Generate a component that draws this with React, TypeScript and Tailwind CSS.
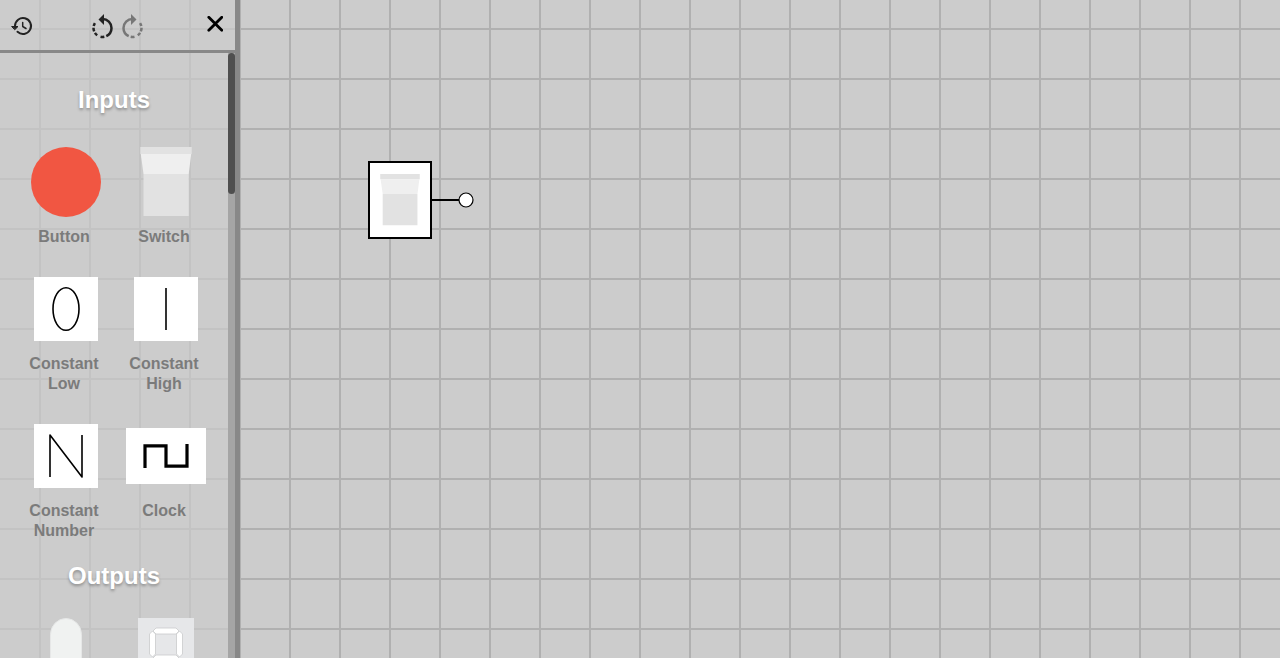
import type { ReactNode } from "react";

type Part = { name: string; icon: ReactNode; unlabelled?: boolean };

function HistoryIcon() {
  return (
    <svg width="24" height="24" viewBox="0 0 24 24" fill="none" stroke="currentColor" strokeLinecap="round" strokeLinejoin="round" aria-hidden="true">
      <path d="M5 12.500V12A8 8 0 1 1 7.500 17.800" strokeWidth="2" />
      <path d="M2 12.500H8L5 15.500Z" fill="currentColor" strokeWidth="1" />
      <path d="M12.700 8.500V12.500L16 14.500" strokeWidth="1.500" />
    </svg>
  );
}

function RotateIcon({ mirrored = false }: { mirrored?: boolean }) {
  return (
    <svg width="24" height="28" viewBox="0 0 24 28" aria-hidden="true">
      <g transform={mirrored ? "translate(24.500 0) scale(-1 1)" : "translate(0.500 0)"}>
        <path
          d="M12 7A9 9 0 0 1 12 25A9 9 0 0 1 12 7"
          pathLength="360"
          strokeDasharray="155 13 25 23 21 11 23 12 20 57"
          fill="none"
          stroke="currentColor"
          strokeWidth="2.500"
        />
        <path d="M13.500 2L8 7.500L13.500 13Z" fill="currentColor" />
      </g>
    </svg>
  );
}

function ButtonIcon() {
  return (
    <svg width="72" height="72" viewBox="0 0 72 72" aria-hidden="true">
      <circle cx="36" cy="36" r="35" fill="#f15642" />
    </svg>
  );
}

function SwitchShape({ width, height }: { width: number; height: number }) {
  return (
    <svg width={width} height={height} viewBox="0 0 52 70" preserveAspectRatio="none" aria-hidden="true">
      <path d="M3.500 27H48.700V69H3.500Z" fill="#e2e2e2" />
      <path d="M0.300 0H51.700V7H0.300Z" fill="#e2e2e2" />
      <path d="M0.800 7H51.200L48.700 27H3.500Z" fill="#efefef" />
    </svg>
  );
}

function ConstantIcon({ children }: { children: ReactNode }) {
  return (
    <svg width="64" height="64" viewBox="0 0 64 64" fill="none" stroke="#000" strokeWidth="1.6" aria-hidden="true">
      <path d="M0 0H64V64H0Z" fill="#fff" stroke="none" />
      {children}
    </svg>
  );
}

function ClockIcon() {
  return (
    <svg width="80" height="56" viewBox="0 0 80 56" fill="none" aria-hidden="true">
      <path d="M0 0H80V56H0Z" fill="#fff" />
      <path d="M19 40V17.800H40V38.200H61V16" stroke="#000" strokeWidth="3.200" />
    </svg>
  );
}

function LightIcon() {
  return (
    <svg width="32" height="80" viewBox="0 0 32 80" aria-hidden="true">
      <path d="M0.500 80V16.500A15.500 16 0 0 1 31.500 16.500V80Z" fill="#f0f2f1" stroke="#e6e7e7" />
    </svg>
  );
}

function SevenSegmentIcon() {
  return (
    <svg width="56" height="80" viewBox="0 0 56 80" aria-hidden="true">
      <path d="M0 0H56V80H0Z" fill="#e6e7e9" />
      <g fill="#fff" stroke="#c9cacc" strokeWidth="0.8">
        <path d="M15 13L18 10H38L41 13L38 16H18Z" />
        <path d="M14.500 13L17.500 16V36L14.500 39L11.500 36V16Z" />
        <path d="M41.500 13L44.500 16V36L41.500 39L38.500 36V16Z" />
        <path d="M15 40L18 37H38L41 40L38 43H18Z" />
        <path d="M14.500 41L17.500 44V64L14.500 67L11.500 64V44Z" />
        <path d="M41.500 41L44.500 44V64L41.500 67L38.500 64V44Z" />
        <path d="M15 67L18 64H38L41 67L38 70H18Z" />
      </g>
    </svg>
  );
}

const inputs: Part[] = [
  { name: "Button", icon: <ButtonIcon /> },
  { name: "Switch", icon: <SwitchShape width={52} height={70} /> },
  { name: "Constant Low", icon: <ConstantIcon><ellipse cx="32" cy="32" rx="13" ry="21.300" /></ConstantIcon> },
  { name: "Constant High", icon: <ConstantIcon><path d="M32 11V53" /></ConstantIcon> },
  { name: "Constant Number", icon: <ConstantIcon><path d="M16 53V11L48 53V11" strokeLinejoin="round" /></ConstantIcon> },
  { name: "Clock", icon: <ClockIcon /> },
];

const outputs: Part[] = [
  { name: "Light", icon: <LightIcon />, unlabelled: true },
  { name: "Segment display", icon: <SevenSegmentIcon />, unlabelled: true },
];

function Section({ title, parts }: { title: string; parts: Part[] }) {
  return (
    <section className="mb-[21px] flex flex-col gap-7">
      <h2 className="text-center text-2xl leading-7 font-bold text-white [text-shadow:0_2px_3px_rgba(0,0,0,0.3)]">
        {title}
      </h2>
      <div className="grid grid-cols-2 gap-y-[22px]">
        {parts.map((part) => (
          <button
            key={part.name}
            type="button"
            aria-label={part.name}
            className="flex flex-col items-center justify-start gap-[5px]"
          >
            <span className="flex h-20 items-center justify-center pl-1">{part.icon}</span>
            {!part.unlabelled && (
              <span className="w-20 text-base leading-5 font-bold text-[#7b7b7b]">{part.name}</span>
            )}
          </button>
        ))}
      </div>
    </section>
  );
}

function Sidebar() {
  return (
    <aside className="flex w-60 shrink-0 flex-col border-r-5 border-[#888888] bg-[#cccccc]/70">
      <header className="flex h-[53px] shrink-0 items-center border-b-3 border-[#888888] pt-0.5 pr-2 pl-2.5 text-[#222222]">
        <button type="button" aria-label="History">
          <HistoryIcon />
        </button>
        <div className="ml-14 flex gap-1.5">
          <button type="button" aria-label="Undo">
            <RotateIcon />
          </button>
          <button type="button" aria-label="Redo" className="text-[#777777]">
            <RotateIcon mirrored />
          </button>
        </div>
        <button type="button" aria-label="Close" className="mr-1 mb-1 ml-auto text-black">
          <svg width="16" height="16" viewBox="0 0 16 16" stroke="currentColor" strokeWidth="2.8" strokeLinecap="round" aria-hidden="true">
            <path d="M1.800 1.300L14.800 14.300M14.800 1.300L1.800 14.300" />
          </svg>
        </button>
      </header>
      <div className="flex min-h-0 flex-1">
        <div className="min-w-0 flex-1 overflow-hidden px-3.5 pt-[33px]">
          <Section title="Inputs" parts={inputs} />
          <Section title="Outputs" parts={outputs} />
        </div>
        <div className="w-[7px] shrink-0 bg-[#a5a5a5]">
          <div className="h-[141px] rounded-full bg-[#4f4f4f]" />
        </div>
      </div>
    </aside>
  );
}

function SwitchNode() {
  return (
    <div className="absolute top-[161px] left-32 flex items-center">
      <div className="flex h-[78px] w-16 items-center justify-center border-2 border-black bg-white">
        <SwitchShape width={40} height={52} />
      </div>
      <svg width="42" height="16" viewBox="0 0 42 16" stroke="#000" aria-hidden="true">
        <path d="M0 8H27" strokeWidth="2" />
        <circle cx="34" cy="8" r="7" fill="#fff" strokeWidth="1.2" />
      </svg>
    </div>
  );
}

export default function App() {
  return (
    <div className="flex h-screen overflow-hidden bg-[#cccccc] bg-[linear-gradient(to_right,#b0b0b0_2px,transparent_2px),linear-gradient(to_bottom,#b0b0b0_2px,transparent_2px)] bg-[length:50px_50px] bg-[position:39px_28px] font-['Liberation_Sans',Arial,sans-serif]">
      <Sidebar />
      <main className="relative min-w-0 flex-1">
        <SwitchNode />
      </main>
    </div>
  );
}
